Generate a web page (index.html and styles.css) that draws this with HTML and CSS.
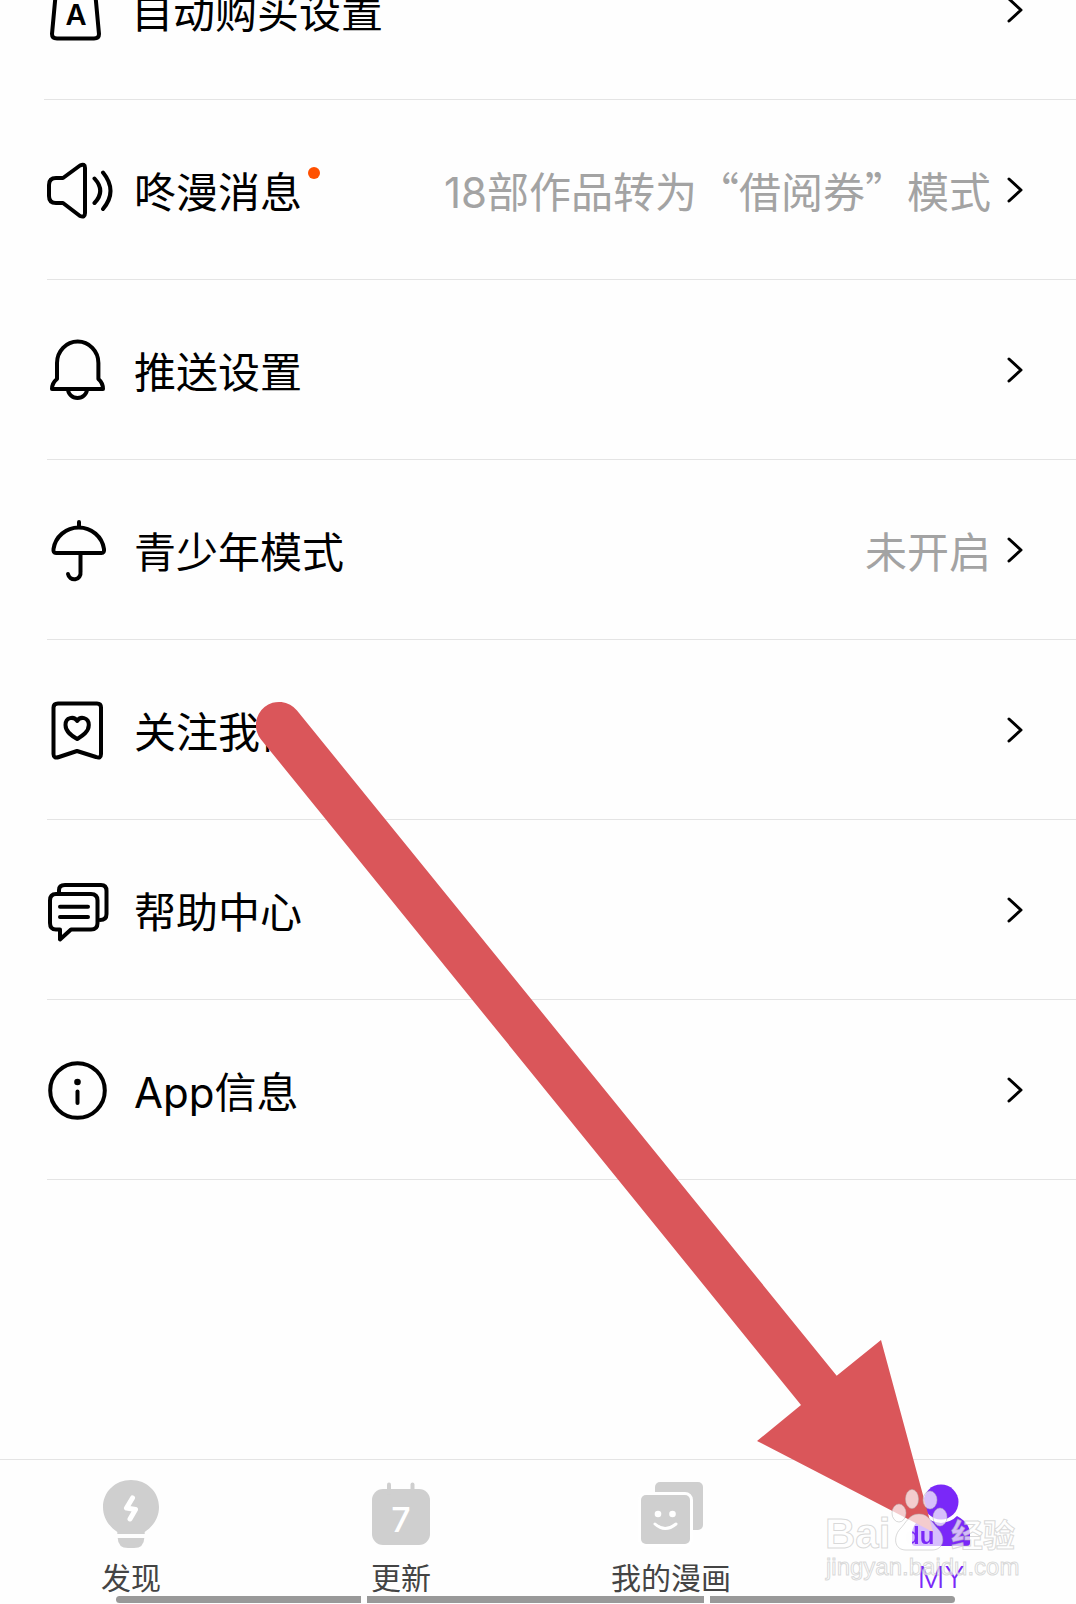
FILE: index.html
```html
<!DOCTYPE html>
<html lang="zh-CN">

<head>
    <meta charset="UTF-8">
    <meta name="viewport" content="width=device-width, initial-scale=1.0">
    <title>MY</title>
    <link rel="stylesheet" href="styles.css">
</head>

<body>

    <main>
        <ul class="menu">
            <li>
                <a class="row" href="#">
                    <svg class="icon" viewBox="0 0 71 71">
                        <path d="M13 6H50L55 60Q55 64.500 50 64.500H13Q8 64.500 8 60Z"/>
                        <text class="icon-letter" x="32" y="51">A</text>
                    </svg>
                    <span class="label">自动购买设置</span>
                    <svg class="chevron" viewBox="0 0 17 28"><path d="M2 3L14 14L2 25"/></svg>
                </a>
            </li>
            <li>
                <a class="row" href="#">
                    <svg class="icon" viewBox="0 0 71 71">
                        <path d="M16 24L33 11.500Q38 9 38 14V59Q38 64 33 62L16 49H9Q2 49 2 42V31Q2 24 9 24Z"/>
                        <path d="M47.500 24.500Q59 37 47.500 49M56 18.500Q71 37 56 55"/>
                    </svg>
                    <span class="label">咚漫消息<i class="dot"></i></span>
                    <span class="value"><span class="latin">18</span>部作品转为“借阅券”模式</span>
                    <svg class="chevron" viewBox="0 0 17 28"><path d="M2 3L14 14L2 25"/></svg>
                </a>
            </li>
            <li>
                <a class="row" href="#">
                    <svg class="icon" viewBox="0 0 71 71">
                        <path d="M10 45V29A20.700 21.500 0 0 1 51.400 29V45Q56 49 56 55H5Q5 49 10 45Z"/>
                        <path d="M21 55A9.500 9 0 0 0 40 55"/>
                    </svg>
                    <span class="label">推送设置</span>
                    <svg class="chevron" viewBox="0 0 17 28"><path d="M2 3L14 14L2 25"/></svg>
                </a>
            </li>
            <li>
                <a class="row" href="#">
                    <svg class="icon" viewBox="0 0 71 71">
                        <path d="M32 8V12M9 39H54.500Q57.500 39 57 35A25.500 25 0 0 0 6.500 35Q6 39 9 39Z"/>
                        <path d="M33.500 39V58A6 6 0 0 1 21 60"/>
                    </svg>
                    <span class="label">青少年模式</span>
                    <span class="value">未开启</span>
                    <svg class="chevron" viewBox="0 0 17 28"><path d="M2 3L14 14L2 25"/></svg>
                </a>
            </li>
            <li>
                <a class="row" href="#">
                    <svg class="icon" viewBox="0 0 71 71">
                        <path d="M11 9.500H50Q54 9.500 54 13.500V60Q54 65 49 63L30 57L12 63Q6.500 65 6.500 60V13.500Q6.500 9.500 11 9.500Z"/>
                        <path d="M30.200 27C27 22 18.500 23 18.500 31C18.500 38 25 42 30.200 45C35 42 41.800 38 41.800 31C41.800 23 33 22 30.200 27Z"/>
                    </svg>
                    <span class="label">关注我们</span>
                    <svg class="chevron" viewBox="0 0 17 28"><path d="M2 3L14 14L2 25"/></svg>
                </a>
            </li>
            <li>
                <a class="row" href="#">
                    <svg class="icon" viewBox="0 0 71 71">
                        <path d="M12 19V16Q12 11 18 11H54Q59.500 11 59.500 17V40Q59.500 46 53 46"/>
                        <path d="M9 20H44Q50.500 20 50.500 26.500V49Q50.500 55.500 44 55.500H24L13 65.500V55.500H9Q3 55.500 3 49V26.500Q3 20 9 20Z"/>
                        <path d="M13 32.700H41M13 43H41"/>
                    </svg>
                    <span class="label">帮助中心</span>
                    <svg class="chevron" viewBox="0 0 17 28"><path d="M2 3L14 14L2 25"/></svg>
                </a>
            </li>
            <li>
                <a class="row" href="#">
                    <svg class="icon" viewBox="0 0 71 71">
                        <circle cx="30.500" cy="36.500" r="27.300"/>
                        <circle class="solid" cx="30.500" cy="28" r="3.300"/>
                        <path d="M30.500 37.500V49"/>
                    </svg>
                    <span class="label"><span class="latin">App</span>信息</span>
                    <svg class="chevron" viewBox="0 0 17 28"><path d="M2 3L14 14L2 25"/></svg>
                </a>
            </li>
        </ul>
    </main>

    <nav class="tabbar">
        <div class="tabs">
            <a class="tab" href="#">
                <svg class="tab-icon" viewBox="0 0 76 76">
                    <path d="M38 4C54 4 66 16 66 31C66 43 59 51 51.700 56V58H24.300V56C17 51 10 43 10 31C10 16 22 4 38 4Z"/>
                    <path d="M24.700 62H51.300Q51 72 41 72H35Q25 72 24.700 62Z"/>
                    <path class="bolt" d="M39.500 22L33.500 32L42.500 33.500L37 43"/>
                </svg>
                <span>发现</span>
            </a>
            <a class="tab" href="#">
                <svg class="tab-icon" viewBox="0 0 76 76">
                    <rect x="9" y="13" width="58" height="56" rx="11"/>
                    <rect x="24" y="6.500" width="4" height="12" rx="2"/>
                    <rect x="47.500" y="6.500" width="4" height="12" rx="2"/>
                    <text class="tab-day" x="38" y="56">7</text>
                </svg>
                <span>更新</span>
            </a>
            <a class="tab" href="#">
                <svg class="tab-icon" viewBox="0 0 76 76">
                    <rect x="22" y="6" width="48" height="48" rx="5"/>
                    <rect class="gap" x="8" y="19" width="49" height="49" rx="5"/>
                    <circle class="hole" cx="25" cy="38" r="3.300"/>
                    <circle class="hole" cx="39.500" cy="38" r="3.300"/>
                    <path class="smile" d="M22 48Q32 57 43 48"/>
                </svg>
                <span>我的漫画</span>
            </a>
            <a class="tab active" href="#">
                <svg class="tab-icon" viewBox="0 0 76 76">
                    <circle cx="38" cy="26" r="17.500"/>
                    <path d="M22 40A22 22 0 0 0 54 40Q67 47 67 58V67Q67 70 64 70H12Q9 70 9 67V58Q9 47 22 40Z"/>
                </svg>
                <span class="latin">MY</span>
            </a>
        </div>
        <div class="home-bar">
            <i></i><i></i><i></i>
        </div>
    </nav>

    <!-- pointer to the MY tab -->
    <svg class="arrow" viewBox="256 701 680 832">
        <path d="M297 710.500L836.700 1375.700L881 1340L933 1532L757 1441L801 1405L261 739.500A23 23 0 0 1 297 710.500Z"/>
    </svg>

    <svg class="watermark" viewBox="820 1484 204 104">
        <mask id="paw">
            <rect x="820" y="1484" width="204" height="104" fill="#fff"/>
            <text class="mark-du" x="905" y="1544" fill="#000">du</text>
        </mask>
        <text class="mark-logo" x="825" y="1548">Bai</text>
        <g mask="url(#paw)">
            <ellipse cx="912" cy="1499" rx="6.500" ry="9.500"/>
            <ellipse cx="930" cy="1500" rx="7" ry="9"/>
            <ellipse cx="899" cy="1513" rx="7" ry="9"/>
            <ellipse cx="940" cy="1517" rx="7" ry="9"/>
            <path d="M919 1514C929 1514 932 1523 938 1529C946 1537 944 1550 932 1550H906C894 1550 893 1537 900 1529C906 1523 909 1514 919 1514Z"/>
        </g>
        <text class="mark-cn" x="951" y="1547">经验</text>
        <text class="mark-url" x="826" y="1575">jingyan.baidu.com</text>
    </svg>

</body>

</html>
```

FILE: styles.css
```css
* {
    box-sizing: border-box;
}

body {
    margin: 0;
    font-family: "Noto Sans CJK SC", sans-serif;
    background-color: #fefefe;
    color: #000;
    display: flex;
    flex-direction: column;
    min-height: 100vh;
    position: relative;
}

a {
    color: inherit;
    text-decoration: none;
}

main {
    flex: 1;
    overflow: hidden;
}

/* list is scrolled, so the first row is cut by the top edge */
.menu {
    list-style: none;
    margin: -80px 0 0;
    padding: 0;
}

.row {
    display: flex;
    align-items: center;
    height: 180px;
    margin-left: 47px;
    padding-right: 52px;
    border-bottom: 1px solid #e4e4e4;
    font-size: 42px;
    line-height: 60px;
}

.menu li:first-child .row {
    margin-left: 44px;
}

.latin {
    font-family: Inter, sans-serif;
    line-height: 1;
}

.icon {
    width: 71px;
    height: 71px;
    margin-right: 16px;
    flex: none;
    fill: none;
    stroke: #000;
    stroke-width: 4;
    stroke-linecap: round;
    stroke-linejoin: round;
}

.icon .solid {
    fill: #000;
    stroke: none;
}

.icon-letter {
    font: 600 29px Inter, sans-serif;
    fill: #000;
    stroke: none;
    text-anchor: middle;
}

.label {
    position: relative;
    white-space: nowrap;
}

.dot {
    position: absolute;
    top: 7px;
    right: -18px;
    width: 12px;
    height: 12px;
    border-radius: 50%;
    background-color: #ff5000;
}

.value {
    margin-left: auto;
    color: #a3a3a3;
    white-space: nowrap;
}

.chevron {
    width: 17px;
    height: 28px;
    margin-left: auto;
    flex: none;
    fill: none;
    stroke: #000;
    stroke-width: 3;
    stroke-linecap: round;
    stroke-linejoin: round;
}

.value + .chevron {
    margin-left: 16px;
}

/* bottom tabs */
.tabbar {
    border-top: 1px solid #e4e4e4;
    padding: 16px 0 1px;
}

.tabs {
    display: grid;
    grid-template-columns: repeat(4, 1fr);
    margin-left: -4px;
}

.tab {
    display: flex;
    flex-direction: column;
    align-items: center;
    gap: 6px;
    font-size: 30px;
    line-height: 36px;
    color: #444;
}

.tab.active {
    color: #7a28f8;
    font-weight: 300;
}

.tab .latin {
    line-height: 38px;
}

.tab-icon {
    width: 76px;
    height: 76px;
    fill: #cfcfcf;
}

.active .tab-icon {
    fill: #7a28f8;
}

.bolt,
.smile {
    fill: none;
    stroke: #fff;
    stroke-width: 5;
    stroke-linecap: round;
    stroke-linejoin: round;
}

.smile {
    stroke-width: 3;
}

.hole {
    fill: #fff;
}

.gap {
    stroke: #fff;
    stroke-width: 6;
    paint-order: stroke;
}

.tab-day {
    font: 500 34px Inter, sans-serif;
    fill: #fff;
    text-anchor: middle;
}

.home-bar {
    display: grid;
    grid-template-columns: 245fr 338fr 245fr;
    gap: 6px;
    width: 78%;
    height: 7px;
    margin-left: 116px;
}

.home-bar i {
    background-color: #999;
}

.home-bar i:first-child {
    border-radius: 4px 0 0 4px;
}

.home-bar i:last-child {
    border-radius: 0 4px 4px 0;
}

/* overlays */
.arrow {
    position: absolute;
    left: 256px;
    bottom: 71px;
    width: 680px;
    height: 832px;
    fill: #da565a;
    pointer-events: none;
}

.watermark {
    position: absolute;
    right: 52px;
    bottom: 16px;
    width: 204px;
    height: 104px;
    fill: rgba(255, 255, 255, 0.7);
    stroke: rgba(180, 180, 180, 0.5);
    stroke-width: 1;
    pointer-events: none;
}

.mark-logo {
    font: bold 42px "Liberation Sans", sans-serif;
}

.mark-du {
    font: bold 24px "Liberation Sans", sans-serif;
    stroke: none;
}

.mark-cn {
    font: bold 32px "Noto Sans CJK SC", sans-serif;
}

.mark-url {
    font: 24px "Liberation Sans", sans-serif;
}
```
